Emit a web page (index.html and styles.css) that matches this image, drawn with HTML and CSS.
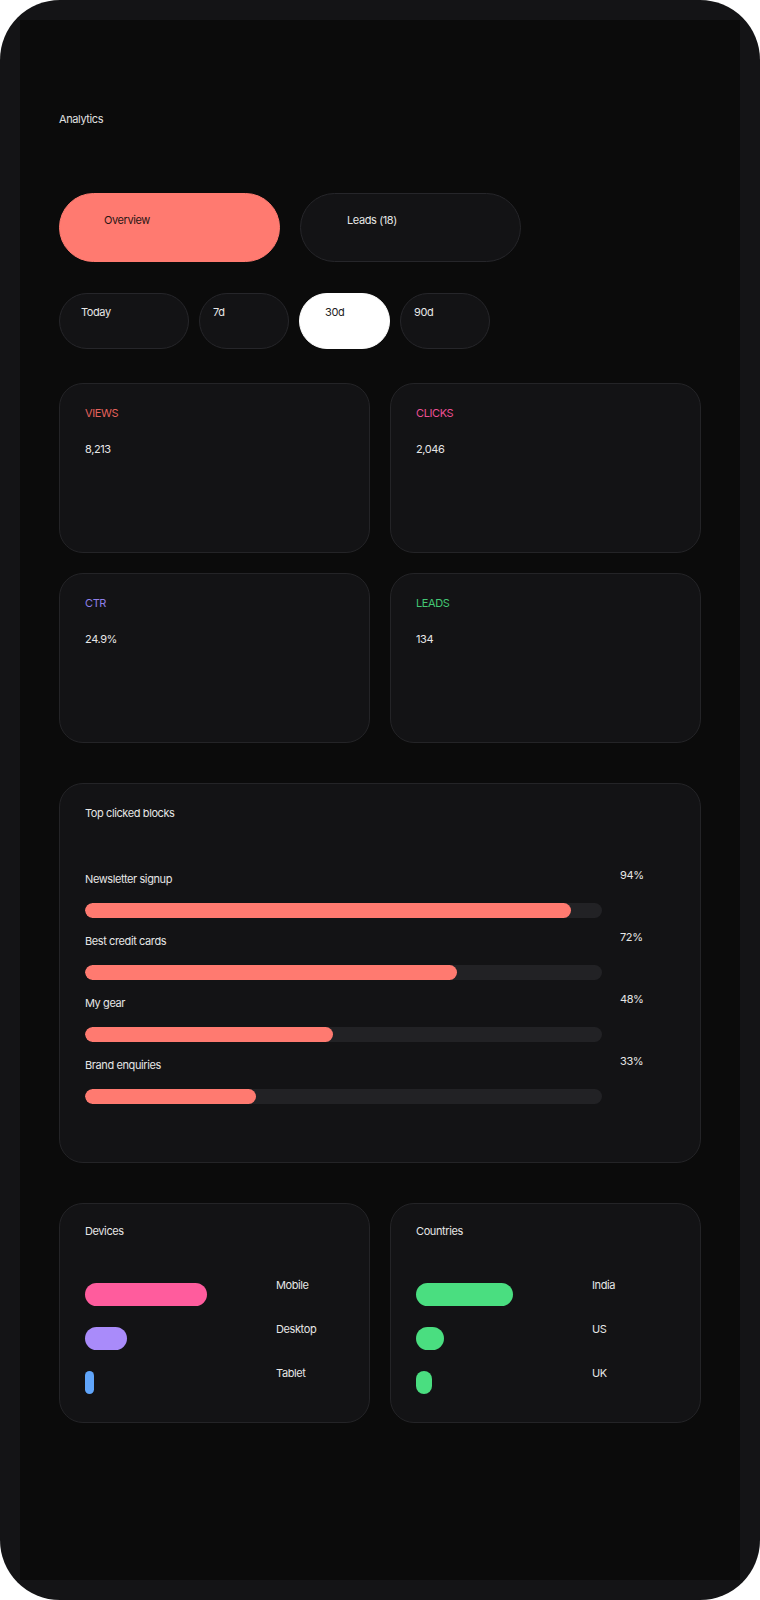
FILE: index.html
```html
<!DOCTYPE html>
<html lang="en">
<head>
    <meta charset="UTF-8">
    <meta name="viewport" content="width=device-width, initial-scale=1.0">
    <title>Analytics</title>
    <link rel="stylesheet" href="styles.css">
</head>
<body>

<div class="phone">
    <div class="screen">
        <h1 class="page-title">Analytics</h1>

        <div class="tabs">
            <div class="tab tab-active">Overview</div>
            <div class="tab">Leads (18)</div>
        </div>

        <div class="ranges">
            <div class="range range-first">Today</div>
            <div class="range">7d</div>
            <div class="range range-active">30d</div>
            <div class="range">90d</div>
        </div>

        <div class="metrics">
            <div class="card metric">
                <div class="metric-label views">VIEWS</div>
                <div class="metric-value">8,213</div>
            </div>
            <div class="card metric">
                <div class="metric-label clicks">CLICKS</div>
                <div class="metric-value">2,046</div>
            </div>
            <div class="card metric">
                <div class="metric-label ctr">CTR</div>
                <div class="metric-value">24.9%</div>
            </div>
            <div class="card metric">
                <div class="metric-label leads">LEADS</div>
                <div class="metric-value">134</div>
            </div>
        </div>

        <div class="card blocks">
            <div class="card-title">Top clicked blocks</div>
            <div class="block-list">
                <div class="block-row">
                    <div class="block-main">
                        <div class="block-name">Newsletter signup</div>
                        <div class="track"><div class="fill" style="width: 94%"></div></div>
                    </div>
                    <div class="block-pct">94%</div>
                </div>
                <div class="block-row">
                    <div class="block-main">
                        <div class="block-name">Best credit cards</div>
                        <div class="track"><div class="fill" style="width: 72%"></div></div>
                    </div>
                    <div class="block-pct">72%</div>
                </div>
                <div class="block-row">
                    <div class="block-main">
                        <div class="block-name">My gear</div>
                        <div class="track"><div class="fill" style="width: 48%"></div></div>
                    </div>
                    <div class="block-pct">48%</div>
                </div>
                <div class="block-row">
                    <div class="block-main">
                        <div class="block-name">Brand enquiries</div>
                        <div class="track"><div class="fill" style="width: 33%"></div></div>
                    </div>
                    <div class="block-pct">33%</div>
                </div>
            </div>
        </div>

        <div class="splits">
            <div class="card split devices">
                <div class="card-title">Devices</div>
                <div class="split-list">
                    <div class="split-row">
                        <div class="split-bar"><span class="pink" style="width: 122px"></span></div>
                        <div class="split-name">Mobile</div>
                    </div>
                    <div class="split-row">
                        <div class="split-bar"><span class="purple" style="width: 42px"></span></div>
                        <div class="split-name">Desktop</div>
                    </div>
                    <div class="split-row">
                        <div class="split-bar"><span class="blue" style="width: 9px"></span></div>
                        <div class="split-name">Tablet</div>
                    </div>
                </div>
            </div>
            <div class="card split countries">
                <div class="card-title">Countries</div>
                <div class="split-list">
                    <div class="split-row">
                        <div class="split-bar"><span class="green" style="width: 97px"></span></div>
                        <div class="split-name">India</div>
                    </div>
                    <div class="split-row">
                        <div class="split-bar"><span class="green" style="width: 28px"></span></div>
                        <div class="split-name">US</div>
                    </div>
                    <div class="split-row">
                        <div class="split-bar"><span class="green" style="width: 16px"></span></div>
                        <div class="split-name">UK</div>
                    </div>
                </div>
            </div>
        </div>
    </div>
</div>

</body>
</html>
```

FILE: styles.css
```css
body {
    margin: 0;
    background-color: #FFFFFF;
    font-family: Inter, "Liberation Sans", Arial, sans-serif;
    font-size: 11px;
    line-height: 14px;
    letter-spacing: -0.4px;
    color: #E6E6E6;
}

.phone {
    width: 760px;
    height: 1600px;
    box-sizing: border-box;
    padding: 20px;
    background-color: #141416;
    border-radius: 60px;
    overflow: hidden;
}

.screen {
    height: 1560px;
    box-sizing: border-box;
    padding: 92px 39px 0;
    background-color: #0B0B0B;
}

.page-title {
    margin: 0;
    font-size: 11px;
    font-weight: normal;
    line-height: 14px;
    color: #E0E0E0;
}

.tabs {
    display: flex;
    gap: 20px;
    margin-top: 67px;
}

.tab {
    width: 221px;
    height: 69px;
    box-sizing: border-box;
    padding: 19px 44px 0 46px;
    border: 1px solid #26262A;
    border-radius: 35px;
    background-color: #131315;
}

.tab-active {
    padding-left: 44px;
    background-color: #FF7A70;
    border-color: #FF7A70;
    color: #2A1715;
}

.ranges {
    display: flex;
    gap: 10px;
    margin-top: 31px;
}

.range {
    width: 90px;
    height: 56px;
    box-sizing: border-box;
    padding: 11px 0 0 13px;
    border: 1px solid #26262A;
    border-radius: 28px;
    background-color: #131315;
}

.range-first {
    width: 130px;
    padding-left: 21px;
}

.range-active {
    width: 91px;
    padding-left: 25px;
    background-color: #FFFFFF;
    border-color: #FFFFFF;
    color: #222222;
}

.card {
    box-sizing: border-box;
    border: 1px solid #242427;
    border-radius: 24px;
    background-color: #131315;
}

.metrics {
    display: grid;
    grid-template-columns: 1fr 1fr;
    gap: 20px;
    margin-top: 34px;
}

.metric {
    height: 170px;
    padding: 22px 25px;
}

.metric-label.views { color: #E5625C; }
.metric-label.clicks { color: #EC4F93; }
.metric-label.ctr { color: #8D7FE8; }
.metric-label.leads { color: #43C774; }

.metric-value {
    margin-top: 22px;
}

.blocks {
    margin-top: 40px;
    padding: 22px 25px 58px;
}

.card-title {
    color: #E6E6E6;
}

.block-list {
    display: flex;
    flex-direction: column;
    gap: 12px;
    margin-top: 48px;
}

.block-row {
    display: grid;
    grid-template-columns: 517px 1fr;
    column-gap: 18px;
}

.block-name {
    margin-top: 4px;
}

.track {
    height: 15px;
    margin-top: 17px;
    border-radius: 8px;
    background-color: #222225;
    overflow: hidden;
}

.fill {
    height: 100%;
    border-radius: 8px;
    background-color: #FF7A70;
}

.splits {
    display: grid;
    grid-template-columns: 1fr 1fr;
    gap: 20px;
    margin-top: 40px;
}

.split {
    padding: 20px 25px 28px;
}

.split-list {
    display: flex;
    flex-direction: column;
    gap: 16px;
    margin-top: 40px;
}

.split-row {
    display: grid;
    grid-template-columns: 191px 1fr;
}

.countries .split-row {
    grid-template-columns: 176px 1fr;
}

.split-bar {
    padding-top: 5px;
}

.split-bar span {
    display: block;
    height: 23px;
    border-radius: 12px;
}

.split-bar .pink { background-color: #FF5C9D; }
.split-bar .purple { background-color: #A98BFA; }
.split-bar .blue { background-color: #60A5FA; }
.split-bar .green { background-color: #4ADE80; }
```
